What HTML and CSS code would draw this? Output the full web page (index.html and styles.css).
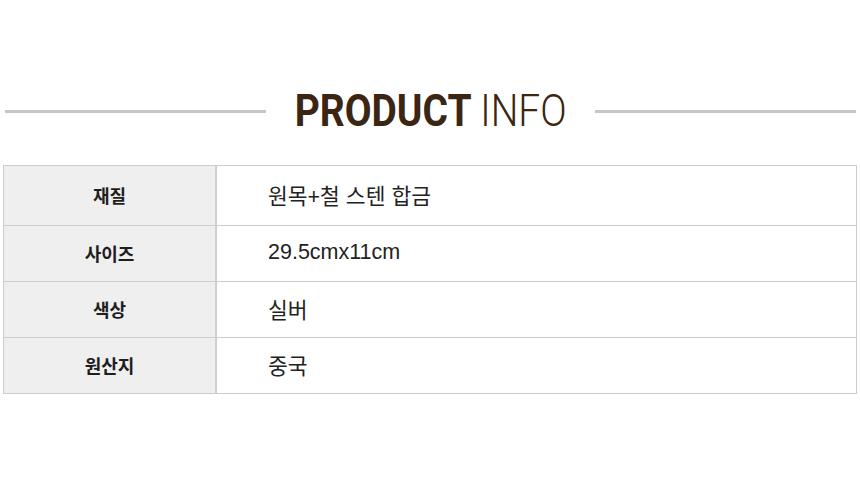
FILE: index.html
```html
<!DOCTYPE html>
<html lang="ko">
<head>
<meta charset="utf-8">
<link rel="stylesheet" href="styles.css">
</head>
<body>
<div class="page">
  <div class="heading">
    <span class="line"></span>
    <h1 class="title"><span class="strong">PRODUCT</span> <span class="light">INFO</span></h1>
    <span class="line"></span>
  </div>
  <div class="info">
    <div class="label first">재질</div>
    <div class="value first">원목+철 스텐 합금</div>
    <div class="label">사이즈</div>
    <div class="value">29.5cmx11cm</div>
    <div class="label">색상</div>
    <div class="value">실버</div>
    <div class="label">원산지</div>
    <div class="value">중국</div>
  </div>
</div>
</body>
</html>
```

FILE: styles.css
```css
html, body {
  margin: 0;
  padding: 0;
  background: #ffffff;
}

.page {
  width: 860px;
  padding-top: 90px;
}

.heading {
  display: flex;
  align-items: center;
  gap: 27px;
  padding: 0 4px 0 5px;
  height: 43px;
}

.line {
  flex: 1;
  height: 3px;
  margin-top: -1px;
  background: #c6c6c6;
}

.title {
  margin: 0 -17px 0 -16px;
  font-family: Roboto, "Liberation Sans", sans-serif;
  font-size: 44px;
  line-height: 43px;
  color: #3a2612;
  white-space: nowrap;
  transform: scaleX(0.885);
  letter-spacing: 0;
}

.strong {
  font-weight: 700;
}

.light {
  font-weight: 300;
}

.info {
  margin: 32px 3px 0 3px;
  display: grid;
  grid-template-columns: 213px 1fr;
  border-top: 1px solid #cccccc;
  border-left: 1px solid #cccccc;
}

.label,
.value {
  box-sizing: border-box;
  height: 56px;
  display: flex;
  align-items: center;
  border-right: 1px solid #cccccc;
  border-bottom: 1px solid #cccccc;
}

.first {
  height: 60px;
}

.label {
  justify-content: center;
  background: #efefef;
  border-right: 2px solid #cfcfcf;
  font-family: "Noto Sans CJK KR", sans-serif;
  font-weight: 700;
  font-size: 18px;
  color: #1e1e1e;
  padding-bottom: 2px;
}

.value {
  padding-left: 51px;
  padding-bottom: 2px;
  font-family: "Liberation Sans", "Noto Sans CJK KR", sans-serif;
  font-size: 21.5px;
  color: #222222;
}
```
